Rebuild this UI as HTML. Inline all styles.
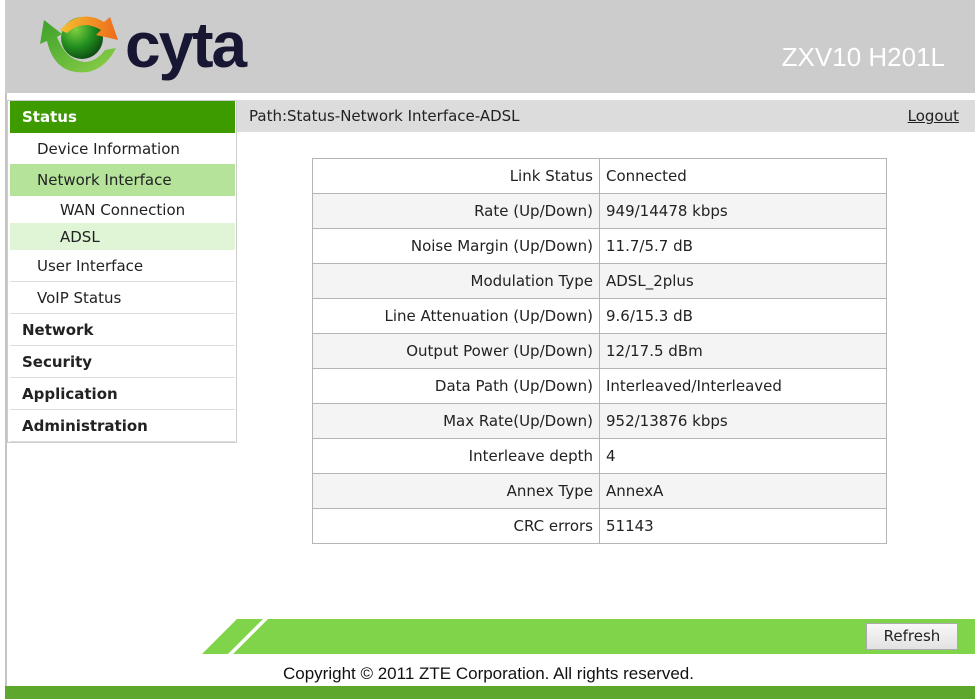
<!DOCTYPE html>
<html><head><meta charset="utf-8"><style>
*{margin:0;padding:0;box-sizing:border-box}
body{width:975px;height:699px;overflow:hidden;background:#fff;position:relative;font-family:"DejaVu Sans","Liberation Sans",sans-serif;font-size:15px;color:#222}
.abs{position:absolute}
#hdr{left:5px;top:0;width:970px;height:93px;background:#cccccc}
#model{right:30px;top:42px;color:#fff;font-family:"Liberation Sans",sans-serif;font-size:26px}
#vl{left:5px;top:93px;width:2px;height:594px;background:#c4c4c4}
#side{left:7px;top:100px;width:230px;height:343px;border:1px solid #ccc;background:#fff}
.it{position:absolute;left:2px;width:225px;border-bottom:1px solid #ddd;display:flex;align-items:center;color:#222}
#path{left:237px;top:100px;width:738px;height:32px;background:#dcdcdc;line-height:32px;padding-left:12px}
#logout{position:absolute;right:16px;top:0;text-decoration:underline}
table{position:absolute;left:312px;top:158px;border-collapse:collapse}
td{border:1px solid #b5b5b5;height:35px;padding:0 6px}
td.l{width:287px;text-align:right}
td.v{width:287px}
tr:nth-child(even) td{background:#f4f4f4}
#gb{left:0;top:619px;width:975px;height:35px}
#btn{left:866px;top:623px;width:92px;height:27px;background:linear-gradient(#f8f8f8,#e2e2e2);border:1px solid #aaa;font-size:15px;text-align:center;line-height:25px;font-family:"DejaVu Sans",sans-serif}
#copy{left:283px;top:664px;font-family:"Liberation Sans",sans-serif;font-size:17px;color:#111}
#bot{left:5px;top:686px;width:970px;height:13px;background:#5ea72d}
</style></head><body>
<div id="hdr" class="abs">
<svg class="abs" style="left:-5px;top:0" width="130" height="90" viewBox="0 0 130 90">
<defs><radialGradient id="g" cx="0.35" cy="0.3" r="0.75"><stop offset="0" stop-color="#7fd040"/><stop offset="0.55" stop-color="#238f1f"/><stop offset="1" stop-color="#0b4a10"/></radialGradient>
<linearGradient id="o" x1="0" y1="0" x2="1" y2="0"><stop offset="0" stop-color="#f5c030"/><stop offset="1" stop-color="#ee6a1a"/></linearGradient>
<linearGradient id="gr" x1="0" y1="0" x2="1" y2="1"><stop offset="0" stop-color="#3aa02a"/><stop offset="1" stop-color="#8fd048"/></linearGradient></defs>
<circle cx="82" cy="38" r="21" fill="url(#g)"/>
<path d="M60 30 Q80 8 104 22 L110 17 L118 40 L96 35 L101 30 Q83 19 67 33 Z" fill="url(#o)"/>
<path d="M44 20 L40 44 L47 41 Q55 76 88 72 Q106 68 116 48 L105 50 Q96 62 84 62 Q66 60 57 37 L62 34 Z" fill="url(#gr)"/>
</svg>
<div class="abs" style="left:120px;top:8px;font-family:'Liberation Sans',sans-serif;font-weight:bold;font-size:64px;color:#171633;letter-spacing:-2px">cyta</div>
<div id="model" class="abs">ZXV10 H201L</div>
</div>
<div id="vl" class="abs"></div>
<div id="side" class="abs">
<div class="it" style="top:0;height:32px;background:#3d9b00;color:#fff;font-weight:bold;padding-left:12px;border:none;font-size:15px">Status</div>
<div class="it" style="top:32px;height:31px;padding-left:27px;border:none">Device Information</div>
<div class="it" style="top:63px;height:32px;padding-left:27px;background:#b5e39a;border:none">Network Interface</div>
<div class="it" style="top:95px;height:27px;padding-left:50px;border:none">WAN Connection</div>
<div class="it" style="top:122px;height:27px;padding-left:50px;background:#e0f4d6;border:none">ADSL</div>
<div class="it" style="top:149px;height:32px;padding-left:27px">User Interface</div>
<div class="it" style="top:181px;height:32px;padding-left:27px">VoIP Status</div>
<div class="it" style="top:213px;height:32px;padding-left:12px;font-weight:bold;font-size:15px">Network</div>
<div class="it" style="top:245px;height:32px;padding-left:12px;font-weight:bold;font-size:15px">Security</div>
<div class="it" style="top:277px;height:32px;padding-left:12px;font-weight:bold;font-size:15px">Application</div>
<div class="it" style="top:309px;height:32px;padding-left:12px;font-weight:bold;font-size:15px">Administration</div>
</div>
<div id="path" class="abs">Path:Status-Network Interface-ADSL<span id="logout">Logout</span></div>
<table>
<tr><td class="l">Link Status</td><td class="v">Connected</td></tr>
<tr><td class="l">Rate (Up/Down)</td><td class="v">949/14478 kbps</td></tr>
<tr><td class="l">Noise Margin (Up/Down)</td><td class="v">11.7/5.7 dB</td></tr>
<tr><td class="l">Modulation Type</td><td class="v">ADSL_2plus</td></tr>
<tr><td class="l">Line Attenuation (Up/Down)</td><td class="v">9.6/15.3 dB</td></tr>
<tr><td class="l">Output Power (Up/Down)</td><td class="v">12/17.5 dBm</td></tr>
<tr><td class="l">Data Path (Up/Down)</td><td class="v">Interleaved/Interleaved</td></tr>
<tr><td class="l">Max Rate(Up/Down)</td><td class="v">952/13876 kbps</td></tr>
<tr><td class="l">Interleave depth</td><td class="v">4</td></tr>
<tr><td class="l">Annex Type</td><td class="v">AnnexA</td></tr>
<tr><td class="l">CRC errors</td><td class="v">51143</td></tr>
</table>
<svg id="gb" class="abs" width="975" height="35"><polygon points="237,0 975,0 975,35 202,35" fill="#80d44a"/><polygon points="263,0 268,0 233,35 228,35" fill="#fff"/></svg>
<div id="btn" class="abs">Refresh</div>
<div id="copy" class="abs">Copyright © 2011 ZTE Corporation. All rights reserved.</div>
<div id="bot" class="abs"></div>
</body></html>
